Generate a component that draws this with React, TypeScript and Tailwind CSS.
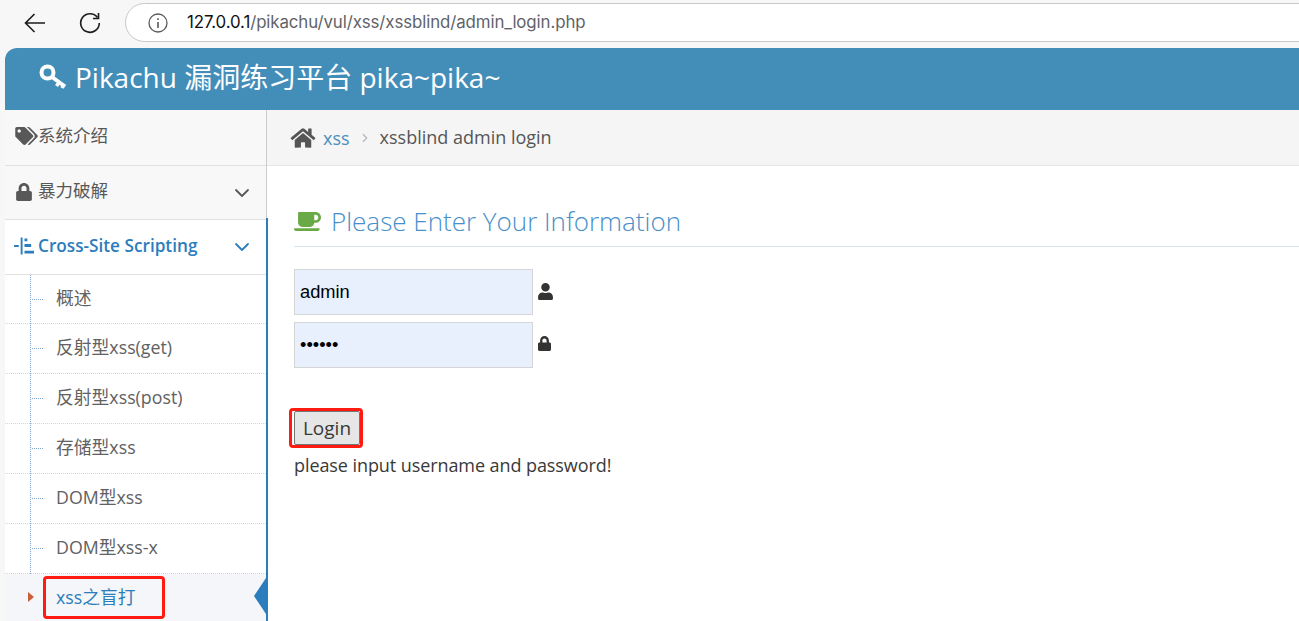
import React from "react";
import { FaCoffee, FaHome, FaLock, FaTags, FaUser } from "react-icons/fa";
import { ChevronDown, ChevronRight } from "lucide-react";

const font = "font-['Open_Sans','Noto_Sans_CJK_SC',sans-serif]";

function Top() {
  return (
    <div className="h-[48px] bg-[#f7f7f7] flex items-center pb-[3px] relative">
      <svg className="ml-[24px] w-[22px] h-[22px]" viewBox="0 0 22 22" fill="none" stroke="#1c1c1c" strokeWidth="1.6">
        <path d="M1.5 11H21M10.5 2L1.5 11L10.5 20" />
      </svg>
      <svg className="ml-[33px] w-[22px] h-[22px]" viewBox="0 0 22 22" fill="none" stroke="#1c1c1c" strokeWidth="1.6">
        <path d="M18.5 5.5A9.3 9.3 0 1 0 20.3 11" />
        <path d="M19.5 1V6.5H14" />
      </svg>
      <div className="ml-[24px] h-[39px] flex-1 -mr-[40px] rounded-l-[20px] border border-[#c9c9c9] bg-white flex items-center">
        <svg className="ml-[22px] w-[20px] h-[20px]" viewBox="0 0 20 20" fill="none" stroke="#5a5a5a" strokeWidth="1.3">
          <circle cx="10" cy="10" r="9" />
          <path d="M10 9V15M10 5.2V7" strokeWidth="1.6" />
        </svg>
        <div className="ml-[19px] pt-[1px] text-[16.85px] tracking-[-0.1px] font-['Inter','Roboto',sans-serif] text-[#5f6368]">
          <span className="text-[#111]">127.0.0.1</span>/pikachu/vul/xss/xssblind/admin_login.php
        </div>
      </div>
    </div>
  );
}

function Main({ icon, label, chevron, active, h }: { icon: React.ReactNode; label: string; chevron?: boolean; active?: boolean; h: string }) {
  return (
    <div className={`${h} flex items-center border-b border-[#e1e1e1] ${active ? "bg-white text-[#2b7dbc] font-semibold" : "bg-[#f8f8f8] text-[#585858]"}`}>
      <div className="w-[33px] flex justify-end shrink-0">{icon}</div>
      <span className={`${active ? "text-[17.2px]" : "text-[17.5px]"} whitespace-nowrap leading-none pb-[3px]`}>{label}</span>
      {chevron && <ChevronDown className={`ml-auto mr-[12px] w-[24px] h-[24px] ${active ? "text-[#2b7dbc]" : "text-[#585858]"}`} strokeWidth={1.8} />}
    </div>
  );
}

const items = ["概述", "反射型xss(get)", "反射型xss(post)", "存储型xss", "DOM型xss", "DOM型xss-x"];

function Sidebar() {
  return (
    <div className="w-[262px] shrink-0 border-r border-[#cccccc] h-full relative z-10">
      <Main h="h-[56px]" icon={<FaTags className="w-[23px] h-[18px] mb-[3px] text-[#585858]" />} label="系统介绍" />
      <Main h="h-[54px]" icon={<FaLock className="w-[18px] h-[18px] mr-[5px] mb-[2px] text-[#585858]" />} label="暴力破解" chevron />
      <Main
        h="h-[55px]"
        active
        icon={
          <svg className="w-[20px] h-[18px] mr-[4px] mb-[2px]" viewBox="0 0 21 18" fill="#2b7dbc">
            <path d="M0 8h5v2H0zM7 0h2v18H7zM11 1h3v3h-3zM11 7h7v3h-7zM11 14h10v3H11z" />
          </svg>
        }
        label="Cross-Site Scripting"
        chevron
      />
      <div className="relative">
        <div className="absolute left-[25px] top-0 bottom-0 border-l border-dotted border-[#7ea4c7]" />
        {items.map((t, i) => (
          <div key={t} className={`${i === 0 ? "h-[49px]" : "h-[50px]"} relative flex items-center pl-[51px] pb-[1px] border-b border-dotted border-[#d6d6d6] text-[17.8px] leading-none text-[#616161]`}>
            <div className="absolute left-[27px] top-[24px] w-[11px] border-t border-dotted border-[#7ea4c7]" />
            {t}
          </div>
        ))}
        <div className="h-[50px] relative flex items-center pl-[51px] pb-[3px] bg-[#f4f6f9] text-[17.8px] leading-none text-[#2b7dbc]">
          <div className="absolute left-[23px] top-[18px] w-0 h-0 border-y-[5px] border-y-transparent border-l-[6px] border-l-[#c86139]" />
          xss之盲打
          <div className="absolute left-[38px] top-[2px] w-[122px] h-[43px] border-[3px] border-[#ff1a12] rounded-[4px]" />
          <div className="absolute right-0 top-[4px] w-0 h-0 border-y-[18px] border-y-transparent border-r-[12px] border-r-[#2b7dbc]" />
        </div>
      </div>
      <div className="absolute -right-[2px] top-[108px] bottom-0 w-[2px] bg-[#2b7dbc]" />
    </div>
  );
}

function Content() {
  return (
    <div className="flex-1 min-w-0 text-[#393939]">
      <div className="h-[56px] bg-[#f5f5f5] border-b border-[#e5e5e5] flex items-center pl-[23px]">
        <FaHome className="w-[26px] h-[22px] text-[#555]" />
        <span className="ml-[7px] text-[18px] text-[#4c8fbd] leading-none">xss</span>
        <ChevronRight className="ml-[8px] w-[14px] h-[14px] text-[#b2b6bf]" strokeWidth={2} />
        <span className="ml-[8px] text-[18px] text-[#555]">xssblind admin login</span>
      </div>
      <div className="pl-[27px]">
        <div className="mt-[33px] h-[48px] border-b border-[#d5e3ef] flex items-center pb-[2px]">
          <FaCoffee className="w-[27px] h-[23px] text-[#69aa46]" />
          <span className="ml-[10px] text-[26px] text-[#478fca] font-light">Please Enter Your Information</span>
        </div>
        <div className="mt-[22px] flex items-center gap-[5px]">
          <input readOnly value="admin" className="w-[239px] h-[46px] px-[5px] bg-[#e8f0fe] border border-[#d5d5d5] text-[18.3px] text-black font-['Liberation_Sans',sans-serif] outline-none" />
          <FaUser className="w-[15px] h-[17px] text-[#333] mb-[2px]" />
        </div>
        <div className="mt-[7px] flex items-center gap-[5px]">
          <input readOnly type="password" value="123456" className="w-[239px] h-[46px] px-[5px] bg-[#e8f0fe] border border-[#d5d5d5] text-[18.3px] text-black font-['Liberation_Sans',sans-serif] outline-none" />
          <FaLock className="w-[13px] h-[15px] text-[#333] mb-[4px]" />
        </div>
        <div className="mt-[43px] relative w-fit">
          <button className="block h-[34px] w-[66px] bg-[#e6e6e6] border border-[#767676] rounded-[2px] text-[19px] text-[#393939] leading-none">Login</button>
          <div className="absolute -left-[5px] -top-[3px] w-[74px] h-[40px] border-[3px] border-[#ff1a12] rounded-[4px]" />
        </div>
        <div className="mt-[7px] text-[18px] tracking-[-0.08px] leading-[26px]">please input username and password!</div>
      </div>
    </div>
  );
}

export default function App() {
  return (
    <div className={`w-[1299px] h-[621px] overflow-hidden bg-white ${font}`}>
      <Top />
      <div className="pl-[5px] bg-[#f7f7f7] h-[573px] flex flex-col">
        <div className="h-[62px] shrink-0 bg-[#438eb9] rounded-tl-[12px] flex items-center pl-[34px] text-white">
          <svg className="w-[28px] h-[26px] mb-[4px]" viewBox="0 0 28 26" fill="none" stroke="#fff">
            <circle cx="8.5" cy="8.5" r="6" strokeWidth="4" />
            <path d="M13 13L26 22.5" strokeWidth="4" />
            <path d="M20 18.5L17.5 22M25 20L23 24" strokeWidth="3.5" />
          </svg>
          <span className="ml-[8px] text-[28px] leading-none whitespace-nowrap pb-[5px]">Pikachu 漏洞练习平台 pika~pika~</span>
        </div>
        <div className="flex-1 min-h-0 flex bg-white">
          <Sidebar />
          <Content />
        </div>
      </div>
    </div>
  );
}
